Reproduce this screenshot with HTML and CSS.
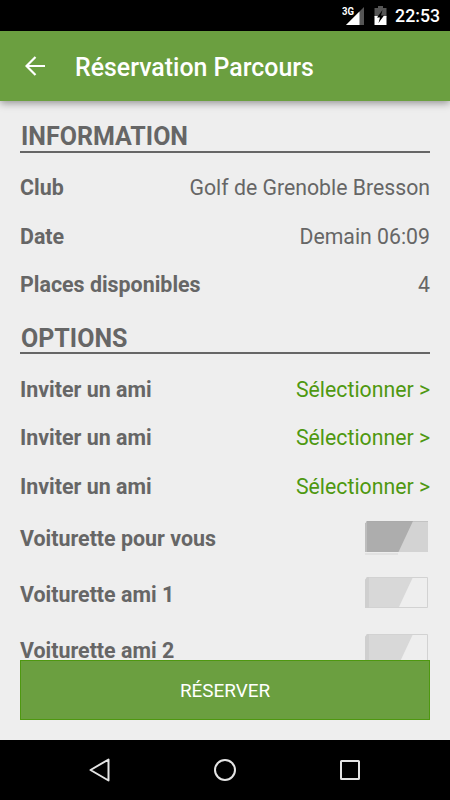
FILE: index.html
```
<!DOCTYPE html>
<html lang="fr">
<head>
<meta charset="utf-8">
<title>Réservation Parcours</title>
<link rel="stylesheet" href="styles.css">
</head>
<body>
<div class="screen">
  <div class="status">
    <svg class="signal" width="24" height="22" viewBox="0 0 24 22">
      <path d="M22 2V20H4Z" fill="#555"/>
      <path d="M17.500 6.500V20H4Z" fill="#fff"/>
      <text x="0" y="10" class="network" textLength="12" lengthAdjust="spacingAndGlyphs">3G</text>
    </svg>
    <svg class="battery" width="13" height="20" viewBox="0 0 13 20">
      <path d="M4 0H9V2H12.500V11H.5V2H4Z" fill="#555"/>
      <path d="M.5 10H12.500V19H.5Z" fill="#fff"/>
      <path d="M8.500 4L3 11.500H6L4.500 17L10 9.500H7Z" fill="#000"/>
    </svg>
    <span class="clock">22:53</span>
  </div>
  <header class="appbar">
    <svg class="back" width="20" height="20" viewBox="0 0 20 20" fill="none" stroke="#fff" stroke-width="2.200">
      <path d="M20 10H2M10.500 1L1.500 10L10.500 19"/>
    </svg>
    <h1>Réservation Parcours</h1>
  </header>
  <main class="content">
    <h2>INFORMATION</h2>
    <div class="row"><b>Club</b><span>Golf de Grenoble Bresson</span></div>
    <div class="row"><b>Date</b><span>Demain 06:09</span></div>
    <div class="row"><b>Places disponibles</b><span>4</span></div>
    <h2 class="options">OPTIONS</h2>
    <div class="row"><b>Inviter un ami</b><a>Sélectionner &gt;</a></div>
    <div class="row"><b>Inviter un ami</b><a>Sélectionner &gt;</a></div>
    <div class="row"><b>Inviter un ami</b><a>Sélectionner &gt;</a></div>
    <div class="row toggle"><b>Voiturette pour vous</b>
      <svg width="63" height="34" viewBox="0 0 63 34">
        <path d="M2 0H63V31H0V3Z" fill="#d3d3d3"/>
        <path d="M0 32H33V34H0Z" fill="#e2e2e2"/>
        <path d="M2 0H48L33.500 31H0V3Z" fill="#adadad"/>
        <path d="M2 .5H63" stroke="#a6a6a6" stroke-opacity=".35"/>
        <path d="M0 3L2 0V31H0Z" fill="#bdbdbd"/>
      </svg>
    </div>
    <div class="row toggle"><b>Voiturette ami 1</b>
      <svg width="63" height="34" viewBox="0 0 63 34">
        <path d="M2 0H48L33.500 31H0V3Z" fill="#d8d8d8"/>
        <path d="M3.500 .5H62.500V30.500H3.500Z" fill="none" stroke="#d2d2d2"/>
        <path d="M0 3L2 0H4V31H0Z" fill="#cfcfcf"/>
      </svg>
    </div>
    <div class="row toggle"><b>Voiturette ami 2</b>
      <svg width="63" height="34" viewBox="0 0 63 34">
        <path d="M2 0H48L33.500 31H0V3Z" fill="#d8d8d8"/>
        <path d="M3.500 .5H62.500V30.500H3.500Z" fill="none" stroke="#d2d2d2"/>
        <path d="M0 3L2 0H4V31H0Z" fill="#cfcfcf"/>
      </svg>
    </div>
  </main>
  <div class="action"><button>RÉSERVER</button></div>
  <nav class="navbar">
    <svg width="24" height="26" viewBox="0 0 24 26"><path d="M20.500 2.500V23.500L2.500 13Z"/></svg>
    <svg width="24" height="24" viewBox="0 0 24 24"><circle cx="12" cy="12" r="10"/></svg>
    <svg width="24" height="24" viewBox="0 0 24 24"><rect x="3" y="3" width="18" height="18" rx=".5"/></svg>
  </nav>
</div>
</body>
</html>
```
FILE: styles.css
```
* { box-sizing: border-box; }

body {
  margin: 0;
  font-family: Roboto, "Liberation Sans", sans-serif;
  color: #666;
  background: #eee;
}

.screen {
  width: 450px;
  height: 800px;
  display: flex;
  flex-direction: column;
  overflow: hidden;
}

.status {
  flex: none;
  height: 31px;
  background: #000;
  color: #fff;
  display: flex;
  align-items: center;
  justify-content: flex-end;
  padding: 1px 10px 0 0;
}

.signal { margin: 0 8px 0 0; }
.battery { margin-right: 8px; }
.network { font: bold 10px Roboto, sans-serif; fill: #fff; }
.clock { font-size: 17.7px; font-weight: 500; line-height: 30px; }

.appbar {
  flex: none;
  height: 70px;
  background: #6b9f40;
  color: #fff;
  display: flex;
  align-items: center;
  padding: 2px 0 0 25px;
  box-shadow: 0 2px 8px rgba(0, 0, 0, .4);
  z-index: 1;
}

.back { margin: -2px 30px 0 0; }

h1 {
  margin: 2px 0 0;
  font-size: 24.9px;
  font-weight: 500;
  line-height: 30px;
}

.content {
  flex: none;
  height: 559px;
  padding: 21px 20px 0;
  overflow: hidden;
}

h2 {
  margin: 0 0 10.6px;
  height: 31px;
  padding: 0 0 0 1px;
  border-bottom: 2px solid #666;
  font-size: 25px;
  font-weight: 700;
  line-height: 30px;
}

.options {
  margin: 14.5px 0 11.3px;
  padding-top: 1px;
}

.row {
  height: 48.3px;
  display: flex;
  align-items: center;
  justify-content: space-between;
  font-size: 21.4px;
  line-height: 25px;
}

.row span,
.row a { font-size: 21.25px; }

.row a { color: #4e9810; }

.toggle { height: 56.2px; }
.toggle svg { margin-right: 2px; }

.action {
  flex: none;
  height: 80px;
  padding: 0 20px 20px;
}

button {
  display: block;
  width: 100%;
  height: 60px;
  padding: 1px 0 0;
  border: 1px solid #4e9810;
  background: #6b9f40;
  color: #fff;
  font: 18.9px Roboto, "Liberation Sans", sans-serif;
}

.navbar {
  flex: none;
  height: 60px;
  background: #000;
  display: flex;
  align-items: center;
  justify-content: space-between;
  padding: 0 88px;
}

.navbar svg {
  fill: none;
  stroke: #e4e4e4;
  stroke-width: 2;
  stroke-linejoin: round;
}
```
